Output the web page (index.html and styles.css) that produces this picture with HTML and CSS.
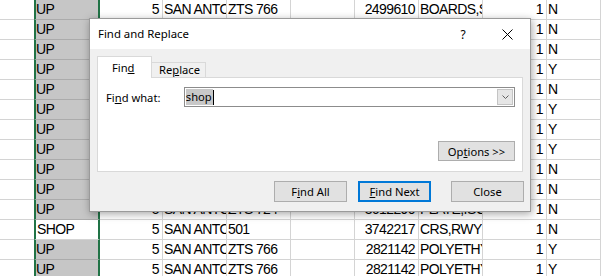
FILE: index.html
```html
<!DOCTYPE html>
<html lang="en">
<head>
    <meta charset="UTF-8">
    <meta name="viewport" content="width=device-width, initial-scale=1.0">
    <title>Find and Replace</title>
    <link rel="stylesheet" href="styles.css">
</head>
<body>
    <!-- Worksheet -->
    <div class="sheet">
        <div class="row"><div class="cell a"></div><div class="cell b">UP</div><div class="cell num">5</div><div class="cell">SAN ANTONIO</div><div class="cell">ZTS 766</div><div class="cell"></div><div class="cell num">2499610</div><div class="cell">BOARDS,SHIP</div><div class="cell num">1</div><div class="cell">N</div></div>
        <div class="row"><div class="cell a"></div><div class="cell b">UP</div><div class="cell num">5</div><div class="cell">SAN ANTONIO</div><div class="cell">ZTS 766</div><div class="cell"></div><div class="cell num">2499610</div><div class="cell">BOARDS,SHIP</div><div class="cell num">1</div><div class="cell">N</div></div>
        <div class="row"><div class="cell a"></div><div class="cell b">UP</div><div class="cell num">5</div><div class="cell">SAN ANTONIO</div><div class="cell">ZTS 766</div><div class="cell"></div><div class="cell num">2499610</div><div class="cell">BOARDS,SHIP</div><div class="cell num">1</div><div class="cell">N</div></div>
        <div class="row"><div class="cell a"></div><div class="cell b">UP</div><div class="cell num">5</div><div class="cell">SAN ANTONIO</div><div class="cell">ZTS 766</div><div class="cell"></div><div class="cell num">2499610</div><div class="cell">BOARDS,SHIP</div><div class="cell num">1</div><div class="cell">Y</div></div>
        <div class="row"><div class="cell a"></div><div class="cell b">UP</div><div class="cell num">5</div><div class="cell">SAN ANTONIO</div><div class="cell">ZTS 766</div><div class="cell"></div><div class="cell num">2499610</div><div class="cell">BOARDS,SHIP</div><div class="cell num">1</div><div class="cell">N</div></div>
        <div class="row"><div class="cell a"></div><div class="cell b">UP</div><div class="cell num">5</div><div class="cell">SAN ANTONIO</div><div class="cell">ZTS 766</div><div class="cell"></div><div class="cell num">2499610</div><div class="cell">BOARDS,SHIP</div><div class="cell num">1</div><div class="cell">Y</div></div>
        <div class="row"><div class="cell a"></div><div class="cell b">UP</div><div class="cell num">5</div><div class="cell">SAN ANTONIO</div><div class="cell">ZTS 766</div><div class="cell"></div><div class="cell num">2499610</div><div class="cell">BOARDS,SHIP</div><div class="cell num">1</div><div class="cell">Y</div></div>
        <div class="row"><div class="cell a"></div><div class="cell b">UP</div><div class="cell num">5</div><div class="cell">SAN ANTONIO</div><div class="cell">ZTS 766</div><div class="cell"></div><div class="cell num">2499610</div><div class="cell">BOARDS,SHIP</div><div class="cell num">1</div><div class="cell">Y</div></div>
        <div class="row"><div class="cell a"></div><div class="cell b">UP</div><div class="cell num">5</div><div class="cell">SAN ANTONIO</div><div class="cell">ZTS 766</div><div class="cell"></div><div class="cell num">2499610</div><div class="cell">BOARDS,SHIP</div><div class="cell num">1</div><div class="cell">N</div></div>
        <div class="row"><div class="cell a"></div><div class="cell b">UP</div><div class="cell num">5</div><div class="cell">SAN ANTONIO</div><div class="cell">ZTS 766</div><div class="cell"></div><div class="cell num">2499610</div><div class="cell">BOARDS,SHIP</div><div class="cell num">1</div><div class="cell">N</div></div>
        <div class="row"><div class="cell a"></div><div class="cell b">UP</div><div class="cell num">5</div><div class="cell">SAN ANTONIO</div><div class="cell">ZTS 724</div><div class="cell"></div><div class="cell num">3612290</div><div class="cell">PLATE,ISO</div><div class="cell num">1</div><div class="cell">N</div></div>
        <div class="row"><div class="cell a"></div><div class="cell b active">SHOP</div><div class="cell num">5</div><div class="cell">SAN ANTONIO</div><div class="cell">501</div><div class="cell"></div><div class="cell num">3742217</div><div class="cell">CRS,RWY</div><div class="cell num">1</div><div class="cell">N</div></div>
        <div class="row"><div class="cell a"></div><div class="cell b">UP</div><div class="cell num">5</div><div class="cell">SAN ANTONIO</div><div class="cell">ZTS 766</div><div class="cell"></div><div class="cell num">2821142</div><div class="cell">POLYETHYLENE</div><div class="cell num">1</div><div class="cell">Y</div></div>
        <div class="row"><div class="cell a"></div><div class="cell b">UP</div><div class="cell num">5</div><div class="cell">SAN ANTONIO</div><div class="cell">ZTS 766</div><div class="cell"></div><div class="cell num">2821142</div><div class="cell">POLYETHYLENE</div><div class="cell num">1</div><div class="cell">Y</div></div>
    </div>

    <!-- Find and Replace dialog -->
    <div class="dialog">
        <div class="titlebar">
            <span class="title">Find and Replace</span>
            <span class="help">?</span>
            <span class="close-x">
                <svg width="11" height="11" viewBox="0 0 11 11"><path d="M0.5 0.5 L10.5 10.5 M10.5 0.5 L0.5 10.5" stroke="#000" stroke-width="1" fill="none"/></svg>
            </span>
        </div>
        <div class="dialog-body">
            <div class="tabs">
                <div class="tab selected">Fin<u>d</u></div>
                <div class="tab">Re<u>p</u>lace</div>
            </div>
            <div class="tab-panel">
                <div class="find-row">
                    <label class="find-label">Fi<u>n</u>d what:</label>
                    <div class="combo">
                        <div class="combo-text"><span class="sel">shop</span><span class="caret"></span></div>
                        <div class="combo-btn">
                            <svg width="7" height="4" viewBox="0 0 7 4"><path d="M0.5 0.5 L3.5 3.5 L6.5 0.5" stroke="#606060" stroke-width="1" fill="none"/></svg>
                        </div>
                    </div>
                </div>
                <div class="options-row">
                    <button class="btn options">Op<u>t</u>ions &gt;&gt;</button>
                </div>
            </div>
            <div class="button-row">
                <button class="btn">F<u>i</u>nd All</button>
                <button class="btn default"><u>F</u>ind Next</button>
                <button class="btn close">Close</button>
            </div>
        </div>
    </div>
</body>
</html>
```

FILE: styles.css
```css
body {
    margin: 0;
    background-color: #fff;
    font-family: 'Liberation Sans', Arial, sans-serif;
    overflow: hidden;
}

/* worksheet grid */
.row {
    display: grid;
    grid-template-columns: 34px 66px 63px 64px 64px 64px 64px 64px 64px 1fr;
    height: 20px;
}

.cell {
    box-sizing: border-box;
    border-right: 1px solid #d4d4d4;
    border-bottom: 1px solid #d4d4d4;
    padding: 0 1px;
    font-size: 14px;
    letter-spacing: -0.6px;
    line-height: 19px;
    color: #000;
    white-space: nowrap;
    overflow: hidden;
}

.cell.a {
    border-right: none;
}

.cell.b {
    border-left: 2px solid #217346;
    border-right: 2px solid #217346;
    border-bottom-color: #ababab;
    background-color: #c6c6c6;
    padding-left: 0;
}

.cell.b.active {
    background-color: #fff;
    border-bottom-color: #d4d4d4;
    padding-left: 1px;
}

.cell.num {
    text-align: right;
    padding-right: 3px;
}

/* dialog */
.dialog {
    position: absolute;
    left: 89px;
    top: 18px;
    width: 442px;
    height: 194px;
    box-sizing: border-box;
    border: 1px solid #9a9a9a;
    background-color: #f0f0f0;
    box-shadow: 1px 2px 8px rgba(0, 0, 0, 0.35);
    font-family: 'Noto Sans', sans-serif;
    font-size: 11.2px;
    color: #000;
    display: flex;
    flex-direction: column;
}

.titlebar {
    height: 30px;
    background-color: #fff;
    display: flex;
    align-items: center;
    padding-left: 8px;
}

.title {
    flex: 1;
    font-size: 11.4px;
    margin-top: -1px;
}

.help {
    width: 20px;
    text-align: center;
    margin-right: 29px;
    font-size: 12px;
}

.close-x {
    display: flex;
    margin-right: 17px;
}

.dialog-body {
    flex: 1;
    padding: 7px 6px 0 7px;
}

.tabs {
    display: flex;
    align-items: flex-end;
    height: 21px;
}

.tab {
    box-sizing: border-box;
    width: 55px;
    height: 15px;
    border: 1px solid #d9d9d9;
    border-bottom: none;
    background-color: #f0f0f0;
    line-height: 14px;
    margin-left: -1px;
    padding-left: 7px;
}

.tab.selected {
    height: 22px;
    margin-left: 0;
    margin-bottom: -1px;
    background-color: #fff;
    position: relative;
    z-index: 1;
    line-height: 22px;
    padding-left: 14px;
}

.tab-panel {
    box-sizing: border-box;
    width: 426px;
    height: 95px;
    border: 1px solid #d9d9d9;
    background-color: #fff;
    padding: 9px 7px 0 8px;
}

.find-row {
    display: flex;
    align-items: center;
}

.find-label {
    width: 78px;
}

.combo {
    box-sizing: border-box;
    width: 332px;
    height: 20px;
    border: 1px solid #8c8c8c;
    display: flex;
    background-color: #fff;
}

.combo-text {
    flex: 1;
    display: flex;
    align-items: center;
    padding-left: 1px;
}

.sel {
    background-color: #c8c8c8;
    line-height: 16px;
    padding: 0 1px 0 0;
}

.caret {
    width: 1px;
    height: 15px;
    background-color: #000;
}

.combo-btn {
    box-sizing: border-box;
    width: 16px;
    margin: 1px;
    border: 1px solid #c4c4c4;
    background-color: #e6e6e6;
    display: flex;
    align-items: center;
    justify-content: center;
}

.options-row {
    display: flex;
    justify-content: flex-end;
    margin-top: 34px;
}

.btn {
    box-sizing: border-box;
    width: 73px;
    height: 21px;
    padding: 0;
    border: 1px solid #adadad;
    background-color: #e1e1e1;
    font-family: 'Noto Sans', sans-serif;
    font-size: 11.2px;
    color: #000;
}

.btn.options {
    width: 77px;
    height: 20px;
}

.button-row {
    display: flex;
    justify-content: flex-end;
    gap: 11px;
    margin-top: 9px;
}

.btn.default {
    border: 2px solid #0078d7;
}

.btn.close {
    margin-left: 9px;
}
```
